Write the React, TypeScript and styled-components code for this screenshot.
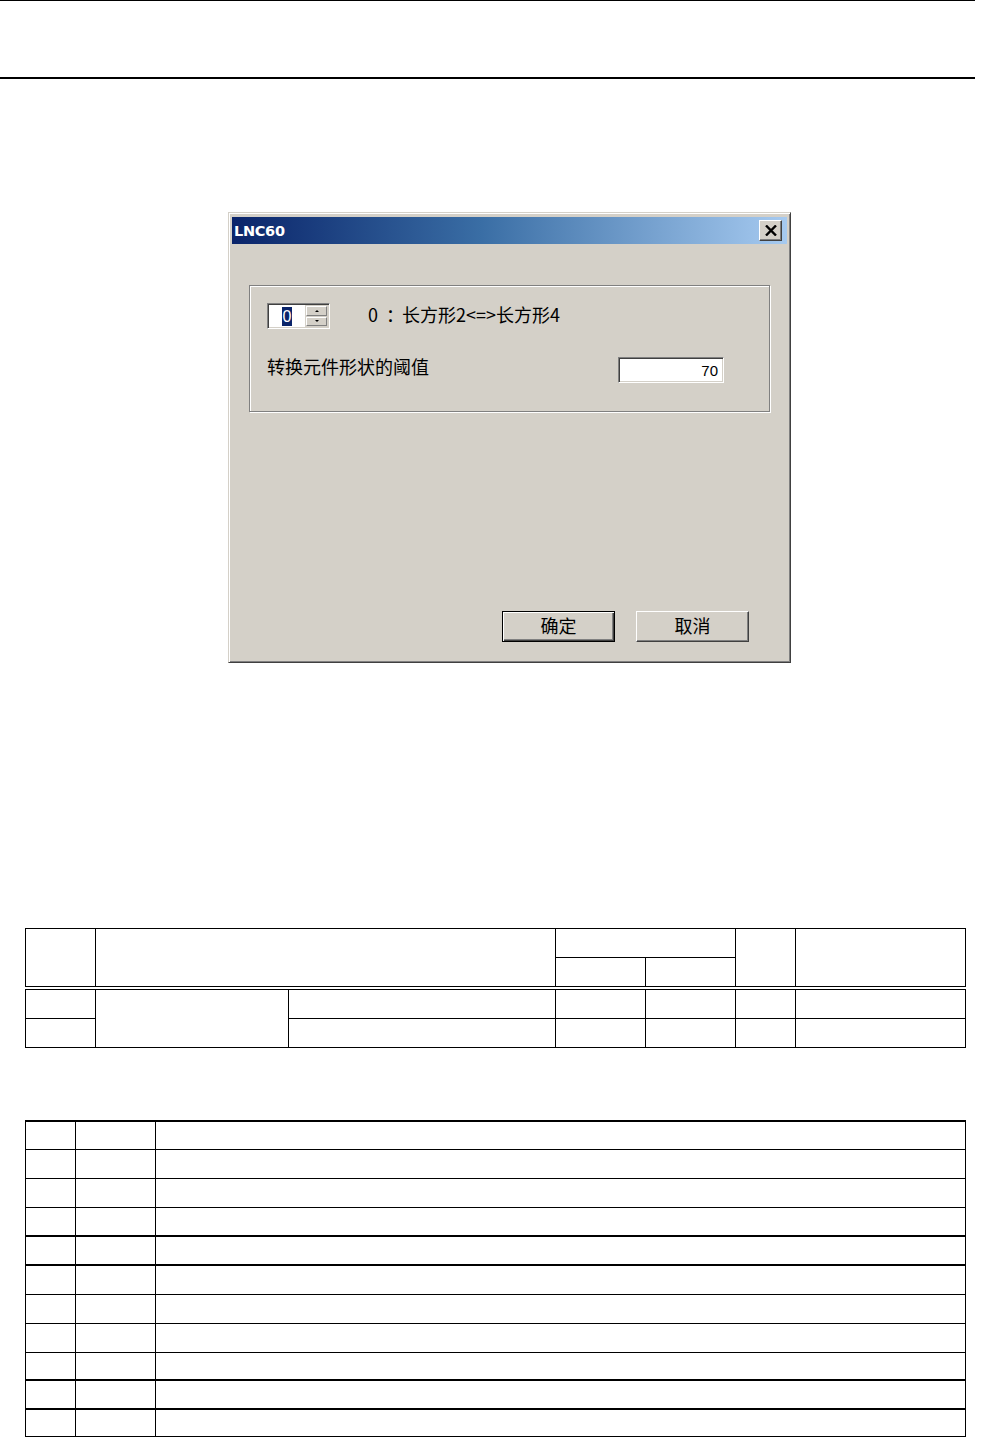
import React from 'react';
import styled, { createGlobalStyle } from 'styled-components';

const GlobalStyle = createGlobalStyle`
  html, body {
    margin: 0;
    padding: 0;
    background: #ffffff;
    overflow: hidden;
  }
  body {
    font-family: "Noto Sans CJK SC", "Liberation Sans", sans-serif;
  }
`;

const Page = styled.div`
  width: 994px;
  display: flex;
  flex-direction: column;
`;

/* page header band: thin rule on top, heavy rule below */
const HeaderBand = styled.div`
  width: 975px;
  height: 76px;
  border-top: 1px solid #000;
  border-bottom: 2px solid #000;
`;

/* ---- win classic dialog ---- */
const Dialog = styled.div`
  box-sizing: border-box;
  width: 563px;
  height: 451px;
  margin: 133px 0 0 228px;
  padding: 4px 3px 3px 3px;
  background: #d4d0c8;
  border: 1px solid;
  border-color: #d4d0c8 #404040 #404040 #d4d0c8;
  box-shadow: inset 1px 1px 0 #ffffff, inset -1px -1px 0 #808080;
  display: flex;
  flex-direction: column;
`;

const TitleBar = styled.div`
  height: 27px;
  display: flex;
  align-items: center;
  justify-content: space-between;
  padding: 0 5px 0 2px;
  background: linear-gradient(to right, #0a246a 0%, #3a6ea5 45%, #a6caf0 100%);
`;

const TitleText = styled.span`
  font-family: "DejaVu Sans", "Liberation Sans", sans-serif;
  font-weight: bold;
  font-size: 14.5px;
  color: #ffffff;
  letter-spacing: -0.3px;
`;

const CloseButton = styled.div`
  box-sizing: border-box;
  width: 23px;
  height: 21px;
  background: #d4d0c8;
  border: 1px solid;
  border-color: #ffffff #404040 #404040 #ffffff;
  box-shadow: inset -1px -1px 0 #808080;
  display: flex;
  align-items: center;
  justify-content: center;
`;

const DialogBody = styled.div`
  flex: 1;
  display: flex;
  flex-direction: column;
  padding: 41px 17px 17px 17px;
`;

const GroupBox = styled.div`
  box-sizing: border-box;
  height: 127px;
  border: 1px solid #808080;
  box-shadow: inset 1px 1px 0 #ffffff, 1px 1px 0 #ffffff;
  padding: 17px 45px 0 17px;
  display: flex;
  flex-direction: column;
  gap: 28px;
`;

const FieldRow = styled.div<{ $spread?: boolean }>`
  height: 26px;
  display: flex;
  align-items: center;
  justify-content: ${p => (p.$spread ? 'space-between' : 'flex-start')};
  gap: 38px;
`;

const Label = styled.span<{ $lift?: number }>`
  font-size: 18px;
  color: #000;
  line-height: 26px;
  white-space: pre;
  margin-bottom: ${p => (p.$lift ?? 0) * 2}px;
`;

const ColonGap = styled.span`
  margin: 0 -2px 0 8px;
`;

const Spinner = styled.div`
  box-sizing: border-box;
  width: 63px;
  height: 26px;
  display: flex;
  border: 1px solid;
  border-color: #808080 #ffffff #ffffff #808080;
  box-shadow: inset 1px 1px 0 #404040, inset -1px -1px 0 #d4d0c8;
  padding: 2px;
  background: #d4d0c8;
`;

const SpinEdit = styled.div`
  flex: 1;
  background: #ffffff;
  display: flex;
  align-items: center;
  justify-content: center;
  margin: -1px 1px -1px -1px;
`;

const Selected = styled.span`
  background: #0a246a;
  color: #ffffff;
  font-family: "Liberation Sans", sans-serif;
  font-size: 16px;
  line-height: 19px;
  padding: 0 1px;
`;

const UpDown = styled.div`
  width: 21px;
  display: flex;
  flex-direction: column;
  gap: 1px;
`;

const ArrowButton = styled.div`
  flex: 1;
  box-sizing: border-box;
  background: #d4d0c8;
  border: 1px solid;
  border-color: #ffffff #808080 #808080 #ffffff;
  display: flex;
  align-items: center;
  justify-content: center;
`;

const Arrow = styled.span<{ $down?: boolean }>`
  width: 0;
  height: 0;
  border-left: 2px solid transparent;
  border-right: 2px solid transparent;
  ${p => (p.$down ? 'border-top: 2px solid #000;' : 'border-bottom: 2px solid #000;')}
`;

const TextInput = styled.div`
  box-sizing: border-box;
  width: 106px;
  height: 26px;
  background: #ffffff;
  border: 1px solid;
  border-color: #808080 #ffffff #ffffff #808080;
  box-shadow: inset 1px 1px 0 #404040, inset -1px -1px 0 #d4d0c8;
  display: flex;
  align-items: center;
  justify-content: flex-end;
  padding-right: 5px;
  font-family: "Liberation Sans", sans-serif;
  font-size: 15px;
  color: #000;
`;

const ButtonRow = styled.div`
  margin-top: auto;
  display: flex;
  justify-content: flex-end;
  gap: 21px;
  padding-right: 21px;
`;

const PushButton = styled.div<{ $default?: boolean }>`
  box-sizing: border-box;
  width: 113px;
  height: 31px;
  padding-bottom: 4px;
  background: #d4d0c8;
  display: flex;
  align-items: center;
  justify-content: center;
  font-size: 18px;
  color: #000;
  border: 1px solid;
  border-color: ${p => (p.$default ? '#000' : '#ffffff #404040 #404040 #ffffff')};
  box-shadow: ${p =>
    p.$default
      ? 'inset 1px 1px 0 #ffffff, inset -1px -1px 0 #404040, inset -2px -2px 0 #808080'
      : 'inset -1px -1px 0 #808080'};
`;

/* ---- spec tables ---- */
const SpecTable = styled.table<{ $top: number }>`
  border-collapse: collapse;
  table-layout: fixed;
  width: 941px;
  margin: ${p => p.$top}px 0 0 25px;
`;

const HeadCell = styled.th`
  border: 1px solid #000;
  height: 28px;
  padding: 0;
`;

const BodyRow = styled.tr<{ $heavy?: boolean; $split?: boolean }>`
  & > td {
    ${p => (p.$heavy ? 'border-top: 2px solid #000;' : '')}
    ${p => (p.$split ? 'border-top: 4px double #000;' : '')}
  }
`;

const Cell = styled.td<{ $h?: number }>`
  border: 1px solid #000;
  height: ${p => p.$h ?? 28}px;
  padding: 0;
`;

const CloseGlyph = () => (
  <svg width="12" height="11" viewBox="0 0 12 11">
    <path d="M1 0.5 L11 10.5 M11 0.5 L1 10.5" stroke="#000" strokeWidth="2.4" />
  </svg>
);

// heavy rule above the row, and cell height so the rules land on the printed grid
const listRows = [
  { heavy: true, h: 26.5 },
  { heavy: false, h: 28 },
  { heavy: false, h: 28 },
  { heavy: false, h: 27.5 },
  { heavy: true, h: 27 },
  { heavy: true, h: 27.5 },
  { heavy: false, h: 28 },
  { heavy: false, h: 28 },
  { heavy: false, h: 26.5 },
  { heavy: true, h: 27 },
  { heavy: true, h: 25.5 },
];

const App = () => {
  return (
    <Page>
      <GlobalStyle />
      <HeaderBand />

      <Dialog>
        <TitleBar>
          <TitleText>LNC60</TitleText>
          <CloseButton>
            <CloseGlyph />
          </CloseButton>
        </TitleBar>
        <DialogBody>
          <GroupBox>
            <FieldRow>
              <Spinner>
                <SpinEdit>
                  <Selected>0</Selected>
                </SpinEdit>
                <UpDown>
                  <ArrowButton>
                    <Arrow />
                  </ArrowButton>
                  <ArrowButton>
                    <Arrow $down />
                  </ArrowButton>
                </UpDown>
              </Spinner>
              <Label $lift={2}>
                0<ColonGap>：</ColonGap>
                {'长方形2<=>长方形4'}
              </Label>
            </FieldRow>
            <FieldRow $spread>
              <Label $lift={4}>转换元件形状的阈值</Label>
              <TextInput>70</TextInput>
            </FieldRow>
          </GroupBox>
          <ButtonRow>
            <PushButton $default>确定</PushButton>
            <PushButton>取消</PushButton>
          </ButtonRow>
        </DialogBody>
      </Dialog>

      <SpecTable $top={265}>
        <colgroup>
          <col style={{ width: 70 }} />
          <col style={{ width: 193 }} />
          <col style={{ width: 267 }} />
          <col style={{ width: 90 }} />
          <col style={{ width: 90 }} />
          <col style={{ width: 60 }} />
          <col style={{ width: 170 }} />
        </colgroup>
        <thead>
          <tr>
            <HeadCell rowSpan={2} />
            <HeadCell colSpan={2} rowSpan={2} />
            <HeadCell colSpan={2} />
            <HeadCell rowSpan={2} />
            <HeadCell rowSpan={2} />
          </tr>
          <tr>
            <HeadCell />
            <HeadCell />
          </tr>
        </thead>
        <tbody>
          <BodyRow $split>
            <Cell />
            <Cell rowSpan={2} />
            <Cell />
            <Cell />
            <Cell />
            <Cell />
            <Cell />
          </BodyRow>
          <BodyRow>
            <Cell />
            <Cell />
            <Cell />
            <Cell />
            <Cell />
            <Cell />
          </BodyRow>
        </tbody>
      </SpecTable>

      <SpecTable $top={72}>
        <colgroup>
          <col style={{ width: 50 }} />
          <col style={{ width: 80 }} />
          <col style={{ width: 810 }} />
        </colgroup>
        <tbody>
          {listRows.map((row, i) => (
            <BodyRow key={i} $heavy={row.heavy}>
              <Cell $h={row.h} />
              <Cell $h={row.h} />
              <Cell $h={row.h} />
            </BodyRow>
          ))}
        </tbody>
      </SpecTable>
    </Page>
  );
};

export default App;
